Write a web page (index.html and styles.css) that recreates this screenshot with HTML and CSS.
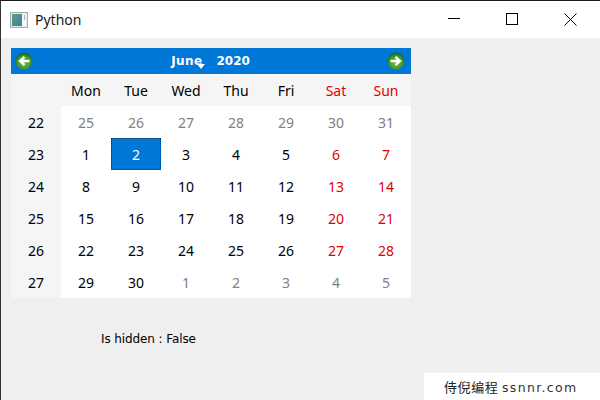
FILE: index.html
```html
<!DOCTYPE html>
<html lang="en">
<head>
<meta charset="utf-8">
<title>Python</title>
<link rel="stylesheet" href="styles.css">
</head>
<body>
<div class="window">
  <header class="titlebar">
    <svg class="app-icon" width="18" height="16" viewBox="0 0 18 16">
      <defs><linearGradient id="pane" x1="0" y1="0" x2="1" y2="1"><stop offset="0" stop-color="#5f9a8c"/><stop offset="1" stop-color="#3f7f96"/></linearGradient></defs>
      <rect x="0.5" y="0.5" width="17" height="15" fill="#e6eaea" stroke="#a3adb0"/>
      <rect x="2" y="2" width="10" height="12" fill="url(#pane)"/>
      <rect x="12" y="2" width="4" height="12" fill="#f5f7f7"/>
      <rect x="14" y="3" width="1" height="5" fill="#a9b4b8"/>
    </svg>
    <span class="title">Python</span>
    <div class="controls">
      <svg width="12" height="12" viewBox="0 0 12 12"><path d="M0 5.5H12" stroke="#000" fill="none"/></svg>
      <svg width="12" height="12" viewBox="0 0 12 12"><rect x="0.5" y="0.5" width="11" height="11" stroke="#000" fill="none"/></svg>
      <svg width="13" height="13" viewBox="0 0 13 13"><path d="M0.5 0.5L12.5 12.5M12.5 0.5L0.5 12.5" stroke="#000" fill="none"/></svg>
    </div>
  </header>
  <main class="content">
    <section class="calendar">
      <div class="nav">
        <svg class="arrow" width="18" height="18" viewBox="0 0 18 18"><defs><radialGradient id="orb" cx="0.5" cy="0.6" r="0.55"><stop offset="0" stop-color="#6fc23a"/><stop offset="0.7" stop-color="#3f9a2e"/><stop offset="1" stop-color="#1d6a2c"/></radialGradient></defs><circle cx="9" cy="9" r="8.5" fill="url(#orb)"/><path d="M14.5 9H6M9.5 4.8L5 9L9.5 13.2" stroke="#fff" stroke-width="2.4" fill="none"/></svg>
        <div class="month-year">
          <span class="month">June<svg class="caret" width="8" height="5" viewBox="0 0 8 5"><path d="M0 0H8L4 5Z" fill="#fff"/></svg></span>
          <span class="year">2020</span>
        </div>
        <svg class="arrow" width="18" height="18" viewBox="0 0 18 18"><circle cx="9" cy="9" r="8.5" fill="url(#orb)"/><path d="M3.5 9H12M8.5 4.8L13 9L8.5 13.2" stroke="#fff" stroke-width="2.4" fill="none"/></svg>
      </div>
      <div class="grid">
        <div class="head"></div><div class="head">Mon</div><div class="head">Tue</div><div class="head">Wed</div><div class="head">Thu</div><div class="head">Fri</div><div class="head red">Sat</div><div class="head red">Sun</div>
        <div class="wk">22</div><div class="d dim">25</div><div class="d dim">26</div><div class="d dim">27</div><div class="d dim">28</div><div class="d dim">29</div><div class="d dim">30</div><div class="d dim">31</div>
        <div class="wk">23</div><div class="d">1</div><div class="d sel">2</div><div class="d">3</div><div class="d">4</div><div class="d">5</div><div class="d red">6</div><div class="d red">7</div>
        <div class="wk">24</div><div class="d">8</div><div class="d">9</div><div class="d">10</div><div class="d">11</div><div class="d">12</div><div class="d red">13</div><div class="d red">14</div>
        <div class="wk">25</div><div class="d">15</div><div class="d">16</div><div class="d">17</div><div class="d">18</div><div class="d">19</div><div class="d red">20</div><div class="d red">21</div>
        <div class="wk">26</div><div class="d">22</div><div class="d">23</div><div class="d">24</div><div class="d">25</div><div class="d">26</div><div class="d red">27</div><div class="d red">28</div>
        <div class="wk">27</div><div class="d">29</div><div class="d">30</div><div class="d dim">1</div><div class="d dim">2</div><div class="d dim">3</div><div class="d dim">4</div><div class="d dim">5</div>
      </div>
    </section>
    <p class="status">Is hidden : False</p>
  </main>
  <div class="watermark">侍倪编程 <span class="site">ssnnr.com</span></div>
</div>
</body>
</html>
```
FILE: styles.css
```css
* { box-sizing: border-box; }
html, body { margin: 0; padding: 0; }
body { width: 600px; height: 400px; overflow: hidden; }
.window {
  position: relative;
  width: 600px;
  height: 400px;
  background: #efefef;
  border-top: 1px solid #1a1a1a;
  border-left: 1px solid #333;
  font-family: "Noto Sans", sans-serif;
  color: #000;
}
.titlebar {
  display: flex;
  align-items: center;
  height: 37px;
  background: #fff;
  padding-left: 9px;
}
.app-icon { margin-right: 7px; }
.title { font-size: 14px; color: #1a1a1a; }
.controls {
  margin-left: auto;
  display: grid;
  grid-template-columns: 58px 58px 59px;
  height: 13px;
  align-items: start;
  justify-items: center;
}
.controls svg { display: block; }
.content { padding: 10px 0 0 10px; }
.calendar { width: 400px; }
.nav {
  display: flex;
  align-items: center;
  justify-content: space-between;
  height: 26px;
  padding: 0 6px 0 4px;
  background: #0078d7;
}
.arrow { display: block; }
.month-year {
  display: flex;
  gap: 14px;
  font-family: "DejaVu Sans", sans-serif;
  font-weight: 700;
  font-size: 12px;
  color: #fff;
  margin-left: 1px;
}
.month { position: relative; letter-spacing: 0.4px; }
.caret { position: absolute; right: -3px; bottom: -1px; }
.grid {
  display: grid;
  grid-template-columns: repeat(8, 50px);
  grid-auto-rows: 32px;
  font-size: 14px;
}
.grid > div { display: flex; align-items: center; justify-content: center; }
.head, .wk { background: #f5f5f5; }
.d { background: #fff; }
.dim { color: #808080; }
.red { color: #e00000; }
.sel { background: #0078d7; color: #fff; outline: 1px dotted #003a6a; outline-offset: -1px; }
.status {
  margin: 33px 0 0 90px;
  font-family: "DejaVu Sans", sans-serif;
  font-size: 12px;
  line-height: 16px;
  letter-spacing: -0.1px;
}
.watermark {
  position: absolute;
  right: 0;
  bottom: 0;
  width: 176px;
  height: 27px;
  background: #fff;
  padding-left: 20px;
  font-family: "Noto Sans CJK SC", sans-serif;
  font-size: 13px;
  line-height: 27px;
  letter-spacing: 0.6px;
  color: #222;
}
.site { font-family: "DejaVu Sans", sans-serif; font-size: 12.5px; letter-spacing: 1.35px; color: #333; }
```
